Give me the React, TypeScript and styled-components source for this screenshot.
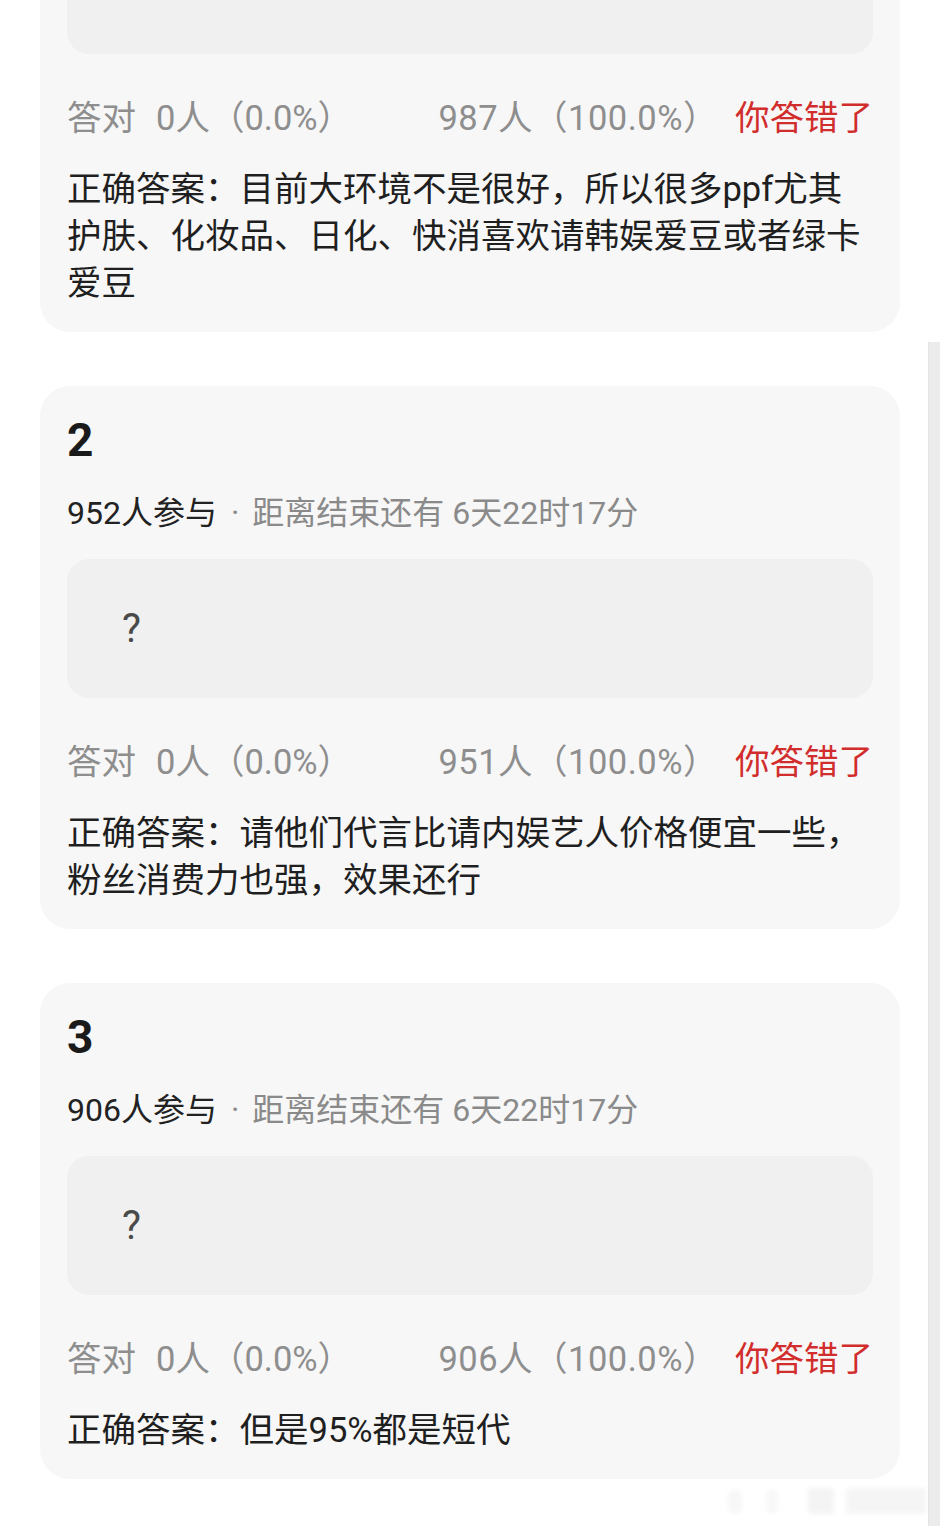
import React from "react";
import styled, { createGlobalStyle } from "styled-components";

const GlobalStyle = createGlobalStyle`
  html, body {
    margin: 0;
    padding: 0;
    background: #ffffff;
  }
  body {
    font-family: Roboto, "Noto Sans CJK SC", sans-serif;
    -webkit-font-smoothing: antialiased;
  }
`;

const Page = styled.div`
  position: relative;
  width: 940px;
  height: 1526px;
  overflow: hidden;
  background: #ffffff;
`;

const List = styled.div`
  display: flex;
  flex-direction: column;
  gap: 54px;
  margin: -258px 40px 0;
`;

const Card = styled.section`
  background: #f7f7f7;
  border-radius: 30px;
  padding: 26px 27px 25px;
  display: flex;
  flex-direction: column;
`;

const Number = styled.div`
  font-size: 46px;
  font-weight: 700;
  line-height: 56px;
  color: #1a1a1a;
`;

const Meta = styled.div`
  margin-top: 23px;
  font-size: 32px;
  line-height: 44px;
  color: #8a8a8a;
  white-space: nowrap;
`;

const Joined = styled.span`
  color: #222222;
`;

const Dot = styled.span`
  margin: 0 13px 0 14px;
`;

const OptionBox = styled.div`
  margin-top: 24px;
  height: 139px;
  border-radius: 22px;
  background: #f0f0f0;
  display: flex;
  align-items: center;
  padding-left: 55px;
  font-size: 40px;
  color: #4a4a4a;
`;

const Stats = styled.div`
  margin-top: 41px;
  display: flex;
  justify-content: space-between;
  align-items: center;
  font-size: 34.5px;
  line-height: 46px;
  color: #8e8e8e;
  white-space: nowrap;
`;

const Count = styled.span<{ $gap?: number }>`
  margin-left: ${(p) => p.$gap ?? 0}px;
`;

const RightGroup = styled.div`
  display: flex;
  align-items: center;
  gap: 17px;
`;

const Share = styled.span`
  letter-spacing: 0.5px;
`;

const Wrong = styled.span`
  color: #d22d2d;
`;

const Answer = styled.p`
  margin: 25px 0 0;
  font-size: 34.5px;
  line-height: 47px;
  color: #1f1f1f;
`;

const Scrollbar = styled.div`
  position: absolute;
  top: 342px;
  right: 0;
  bottom: 0;
  width: 11px;
  background: #ececec;
  border-left: 1px solid #e4e4e4;
`;

const Smudge = styled.svg`
  position: absolute;
  left: 722px;
  top: 1484px;
  width: 208px;
  height: 34px;
  opacity: 0.16;
  filter: blur(2px);
`;

type Question = {
  no: number;
  joined: number;
  wrong: number;
  answer: string;
};

const questions: Question[] = [
  {
    no: 1,
    joined: 987,
    wrong: 987,
    answer:
      "目前大环境不是很好，所以很多ppf尤其护肤、化妆品、日化、快消喜欢请韩娱爱豆或者绿卡爱豆",
  },
  {
    no: 2,
    joined: 952,
    wrong: 951,
    answer: "请他们代言比请内娱艺人价格便宜一些，粉丝消费力也强，效果还行",
  },
  {
    no: 3,
    joined: 906,
    wrong: 906,
    answer: "但是95%都是短代",
  },
];

const QuestionCard: React.FC<{ q: Question }> = ({ q }) => (
  <Card>
    <Number>{q.no}</Number>
    <Meta>
      <Joined>{q.joined}人参与</Joined>
      <Dot>·</Dot>距离结束还有 6天22时17分
    </Meta>
    <OptionBox>?</OptionBox>
    <Stats>
      <span>
        答对<Count $gap={20}>0人（0.0%）</Count>
      </span>
      <RightGroup>
        <Share>{q.wrong}人（100.0%）</Share>
        <Wrong>你答错了</Wrong>
      </RightGroup>
    </Stats>
    <Answer>正确答案：{q.answer}</Answer>
  </Card>
);

export default function App() {
  return (
    <>
      <GlobalStyle />
      <Page>
        <List>
          {questions.map((q) => (
            <QuestionCard key={q.no} q={q} />
          ))}
        </List>
        <Scrollbar />
        <Smudge viewBox="0 0 208 34">
          <rect x="6" y="6" width="14" height="24" rx="6" fill="#cfcfcf" />
          <rect x="44" y="6" width="12" height="24" rx="5" fill="#d8d8d8" />
          <rect x="86" y="4" width="26" height="26" rx="3" fill="#bdbdbd" />
          <rect x="124" y="4" width="80" height="26" rx="3" fill="#c4c4c4" />
        </Smudge>
      </Page>
    </>
  );
}
